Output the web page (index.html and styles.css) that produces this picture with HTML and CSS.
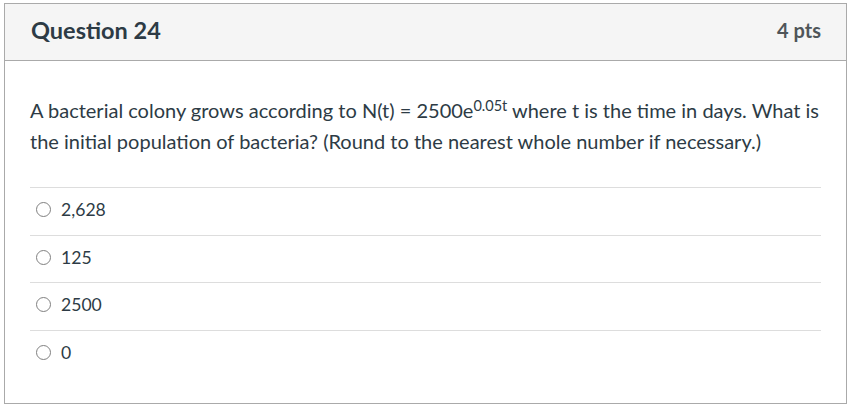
FILE: index.html
```html
<!DOCTYPE html>
<html>
<head>
<meta charset="utf-8">
<link rel="stylesheet" href="styles.css">
</head>
<body>
<div class="card">
  <div class="header">
    <h2 class="title">Question 24</h2>
    <div class="pts">4 pts</div>
  </div>
  <div class="body">
    <p class="question">A bacterial colony grows according to N(t) = 2500e<sup>0.05t</sup> where t is the time in days. What is the initial population of bacteria? (Round to the nearest whole number if necessary.)</p>
    <div class="answers">
      <label class="answer"><span class="radio"></span><span>2,628</span></label>
      <label class="answer"><span class="radio"></span><span>125</span></label>
      <label class="answer"><span class="radio"></span><span>2500</span></label>
      <label class="answer"><span class="radio"></span><span>0</span></label>
    </div>
  </div>
</div>
</body>
</html>
```
FILE: styles.css
```css
html, body {
  margin: 0;
  padding: 0;
  background: #fff;
}
body {
  padding: 3px 0 0 4px;
  font-family: Lato, "Liberation Sans", sans-serif;
  color: #2d3b45;
}
.card {
  width: 843px;
  height: 401px;
  box-sizing: border-box;
  border: 1px solid #aaaaaa;
  display: flex;
  flex-direction: column;
}
.header {
  height: 57px;
  box-sizing: border-box;
  background: #f5f5f5;
  border-bottom: 1px solid #aaaaaa;
  display: flex;
  align-items: center;
  justify-content: space-between;
  padding: 0 25px 4px 26px;
}
.title {
  margin: 0;
  font-size: 23.5px;
  font-weight: 700;
}
.pts {
  font-size: 20px;
  font-weight: 700;
  color: #4f5559;
}
.body {
  padding: 34px 25px 0 25px;
}
.question {
  margin: 0 0 30px 0;
  font-size: 20px;
  line-height: 31px;
}
.question sup {
  font-size: 14.5px;
  line-height: 0;
  vertical-align: 7px;
}
.answers {
  border-top: 1px solid #dddddd;
}
.answer {
  display: flex;
  align-items: center;
  gap: 10px;
  height: 47.7px;
  box-sizing: border-box;
  border-bottom: 1px solid #dddddd;
  padding: 0 0 4px 6px;
  font-size: 17.6px;
}
.answer:last-child {
  border-bottom: none;
}
.radio {
  width: 13px;
  height: 13px;
  border: 1px solid #808080;
  border-radius: 50%;
  box-sizing: content-box;
}
```
